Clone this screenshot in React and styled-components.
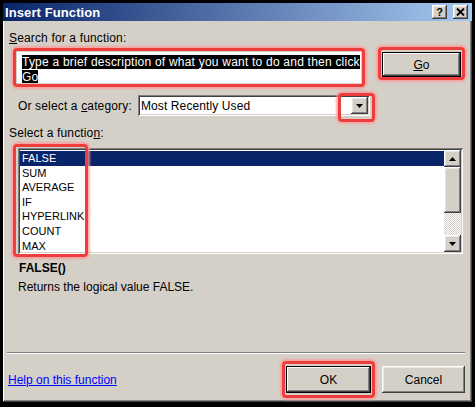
import React from "react";
import styled, { createGlobalStyle, css } from "styled-components";

const Global = createGlobalStyle`
  html, body { margin: 0; padding: 0; background: #000; }
  body { font-family: "Liberation Sans", Arial, sans-serif; font-size: 12px; color: #000; }
  * { box-sizing: border-box; }
`;

const raised = css`
  background: #d4d0c8;
  box-shadow: inset -1px -1px 0 #404040, inset 1px 1px 0 #ffffff,
    inset -2px -2px 0 #808080, inset 2px 2px 0 #e8e6e0;
`;

const sunken = css`
  background: #fff;
  box-shadow: inset 1px 1px 0 #808080, inset -1px -1px 0 #ffffff,
    inset 2px 2px 0 #404040, inset -2px -2px 0 #d4d0c8;
`;

const Page = styled.div`
  width: 475px;
  height: 407px;
  padding: 3px 5px 5px 3px;
  display: flex;
  background: #000;
`;

const Window = styled.div`
  flex: 1;
  display: flex;
  flex-direction: column;
  background: #d4d0c8;
`;

const TitleBar = styled.div`
  height: 18px;
  display: flex;
  align-items: center;
  padding: 0 4px 0 2px;
  background: linear-gradient(to right, #0a246a, #a6caf0);
  color: #fff;
  font-weight: bold;
  font-size: 13px;
`;

const TitleText = styled.div`
  flex: 1;
  letter-spacing: 0.1px;
`;

const CaptionButtons = styled.div`
  display: flex;
  gap: 6px;
`;

const CaptionButton = styled.div`
  ${raised};
  width: 15px;
  height: 14px;
  display: flex;
  align-items: center;
  justify-content: center;
  color: #000;
  font-size: 11px;
  font-weight: bold;
`;

const Body = styled.div`
  flex: 1;
  display: flex;
  flex-direction: column;
  padding: 10px 7px 4px 6px;
  box-shadow: inset -1px -1px 0 #404040, inset 1px 0 0 #ffffff, inset -2px -2px 0 #808080;
`;

const Label = styled.div`
  line-height: 14px;
  white-space: nowrap;
  letter-spacing: 0.15px;
  margin-left: ${(p) => p.$indent || 0}px;
  margin-top: ${(p) => p.$top || 0}px;
  width: ${(p) => (p.$width ? `${p.$width}px` : "auto")};
  flex-shrink: 0;
`;

const Highlight = styled.div`
  border: 3px solid #ee3d3d;
  border-radius: 4px;
  box-shadow: 0 0 2px 2px rgba(255, 150, 150, 0.75);
  padding: ${(p) => p.$pad || "1px"};
`;

const OverlayHighlight = styled(Highlight)`
  position: absolute;
  left: ${(p) => p.$x}px;
  top: ${(p) => p.$y}px;
  width: ${(p) => p.$w}px;
  height: ${(p) => p.$h}px;
  padding: 0;
  pointer-events: none;
`;

const SearchRow = styled.div`
  display: flex;
  align-items: flex-start;
  margin-top: 2px;
`;

const SearchWrap = styled(Highlight)`
  width: 352px;
  height: 39px;
  margin-top: 1px;
  margin-left: 4px;
`;

const TextBox = styled.div`
  background: #fff;
  height: 100%;
  padding: 3px 0 0 5px;
  line-height: 15px;
  font-size: 12px;
  letter-spacing: 0.22px;
  white-space: nowrap;
  overflow: hidden;
`;

const Selected = styled.span`
  background: #000;
  color: #fff;
`;

const GoWrap = styled(Highlight)`
  margin-left: 13px;
  width: 87px;
`;

const Button = styled.div`
  ${raised};
  width: ${(p) => p.$w}px;
  height: ${(p) => p.$h}px;
  display: flex;
  align-items: center;
  justify-content: center;
  font-size: 12px;
  ${(p) =>
    p.$default &&
    css`
      box-shadow: inset 0 0 0 1px #000, inset -2px -2px 0 #404040, inset 2px 2px 0 #ffffff,
        inset -3px -3px 0 #808080;
    `}
`;

const CategoryRow = styled.div`
  display: flex;
  align-items: center;
  margin-top: 8px;
`;

const SelectBox = styled.div`
  ${sunken};
  position: relative;
  width: 232px;
  height: 21px;
  display: flex;
  align-items: center;
  padding: 0 2px 0 3px;
  font-size: 12px;
`;

const SelectValue = styled.div`
  flex: 1;
  letter-spacing: 0.1px;
`;

const ArrowButton = styled.div`
  ${raised};
  width: 17px;
  height: ${(p) => p.$h || 17}px;
  display: flex;
  align-items: center;
  justify-content: center;
  flex-shrink: 0;
`;

const ListBox = styled.div`
  ${sunken};
  position: relative;
  margin: 8px 0 0 9px;
  width: 445px;
  height: 106px;
  padding: 2px;
  display: flex;
`;

const Items = styled.div`
  flex: 1;
  padding-top: 1px;
  font-size: 11px;
`;

const Item = styled.div`
  height: 14.6px;
  line-height: 14.6px;
  padding-left: 2px;
  ${(p) =>
    p.$selected &&
    css`
      background: #0a246a;
      color: #fff;
    `}
`;

const ScrollBar = styled.div`
  width: 17px;
  display: flex;
  flex-direction: column;
`;

const Thumb = styled.div`
  ${raised};
  height: 46px;
`;

const Track = styled.div`
  flex: 1;
  background-color: #fff;
  background-image: conic-gradient(#d4d0c8 25%, #fff 0 50%, #d4d0c8 0 75%, #fff 0);
  background-size: 2px 2px;
`;

const FuncName = styled.div`
  font-weight: bold;
  line-height: 14px;
  margin: 7px 0 0 10px;
`;

const FuncDesc = styled.div`
  line-height: 14px;
  margin: 5px 0 0 9px;
`;

const Spacer = styled.div`
  flex: 1;
`;

const Separator = styled.div`
  border-top: 1px solid #808080;
  border-bottom: 1px solid #fff;
  margin-left: -2px;
`;

const BottomRow = styled.div`
  display: flex;
  align-items: center;
  margin-top: 7px;
`;

const HelpLink = styled.a`
  color: #0000ff;
  text-decoration: underline;
  margin-left: -1px;
  margin-right: auto;
  cursor: pointer;
`;

const OkWrap = styled(Highlight)`
  margin-right: 7px;
`;

const Tri = ({ up }) => (
  <svg width="7" height="4" viewBox="0 0 7 4">
    <polygon points={up ? "3.5,0 7,4 0,4" : "0,0 7,0 3.5,4"} fill="#000" />
  </svg>
);

const CloseGlyph = () => (
  <svg width="9" height="8" viewBox="0 0 9 8">
    <path d="M1 0.5 L8 7.5 M8 0.5 L1 7.5" stroke="#000" strokeWidth="1.8" />
  </svg>
);

const functions = ["FALSE", "SUM", "AVERAGE", "IF", "HYPERLINK", "COUNT", "MAX"];

export default function App() {
  return (
    <>
      <Global />
      <Page>
        <Window>
          <TitleBar>
            <TitleText>Insert Function</TitleText>
            <CaptionButtons>
              <CaptionButton>?</CaptionButton>
              <CaptionButton>
                <CloseGlyph />
              </CaptionButton>
            </CaptionButtons>
          </TitleBar>
          <Body>
            <Label>
              <u>S</u>earch for a function:
            </Label>
            <SearchRow>
              <SearchWrap>
                <TextBox>
                  <Selected>
                    Type a brief description of what you want to do and then click
                    <br />
                    Go
                  </Selected>
                </TextBox>
              </SearchWrap>
              <GoWrap $pad="2px 1px 0 1px">
                <Button $w={79} $h={25} $default>
                  <span>
                    <u>G</u>o
                  </span>
                </Button>
              </GoWrap>
            </SearchRow>
            <CategoryRow>
              <Label $indent={9} $width={120}>
                Or select a <u>c</u>ategory:
              </Label>
              <SelectBox>
                <SelectValue>Most Recently Used</SelectValue>
                <ArrowButton>
                  <Tri />
                </ArrowButton>
                <OverlayHighlight $x={200} $y={-2} $w={37} $h={29} />
              </SelectBox>
            </CategoryRow>
            <Label $top={10}>
              Select a functio<u>n</u>:
            </Label>
            <ListBox>
              <Items>
                {functions.map((f, i) => (
                  <Item key={f} $selected={i === 0}>
                    {f}
                  </Item>
                ))}
              </Items>
              <ScrollBar>
                <ArrowButton $h={17}>
                  <Tri up />
                </ArrowButton>
                <Thumb />
                <Track />
                <ArrowButton $h={17}>
                  <Tri />
                </ArrowButton>
              </ScrollBar>
              <OverlayHighlight $x={-5} $y={-4} $w={75} $h={113} />
            </ListBox>
            <FuncName>FALSE()</FuncName>
            <FuncDesc>Returns the logical value FALSE.</FuncDesc>
            <Spacer />
            <Separator />
            <BottomRow>
              <HelpLink>Help on this function</HelpLink>
              <OkWrap $pad="2px 1px">
                <Button $w={85} $h={27} $default>
                  OK
                </Button>
              </OkWrap>
              <Button $w={83} $h={27}>
                Cancel
              </Button>
            </BottomRow>
          </Body>
        </Window>
      </Page>
    </>
  );
}
